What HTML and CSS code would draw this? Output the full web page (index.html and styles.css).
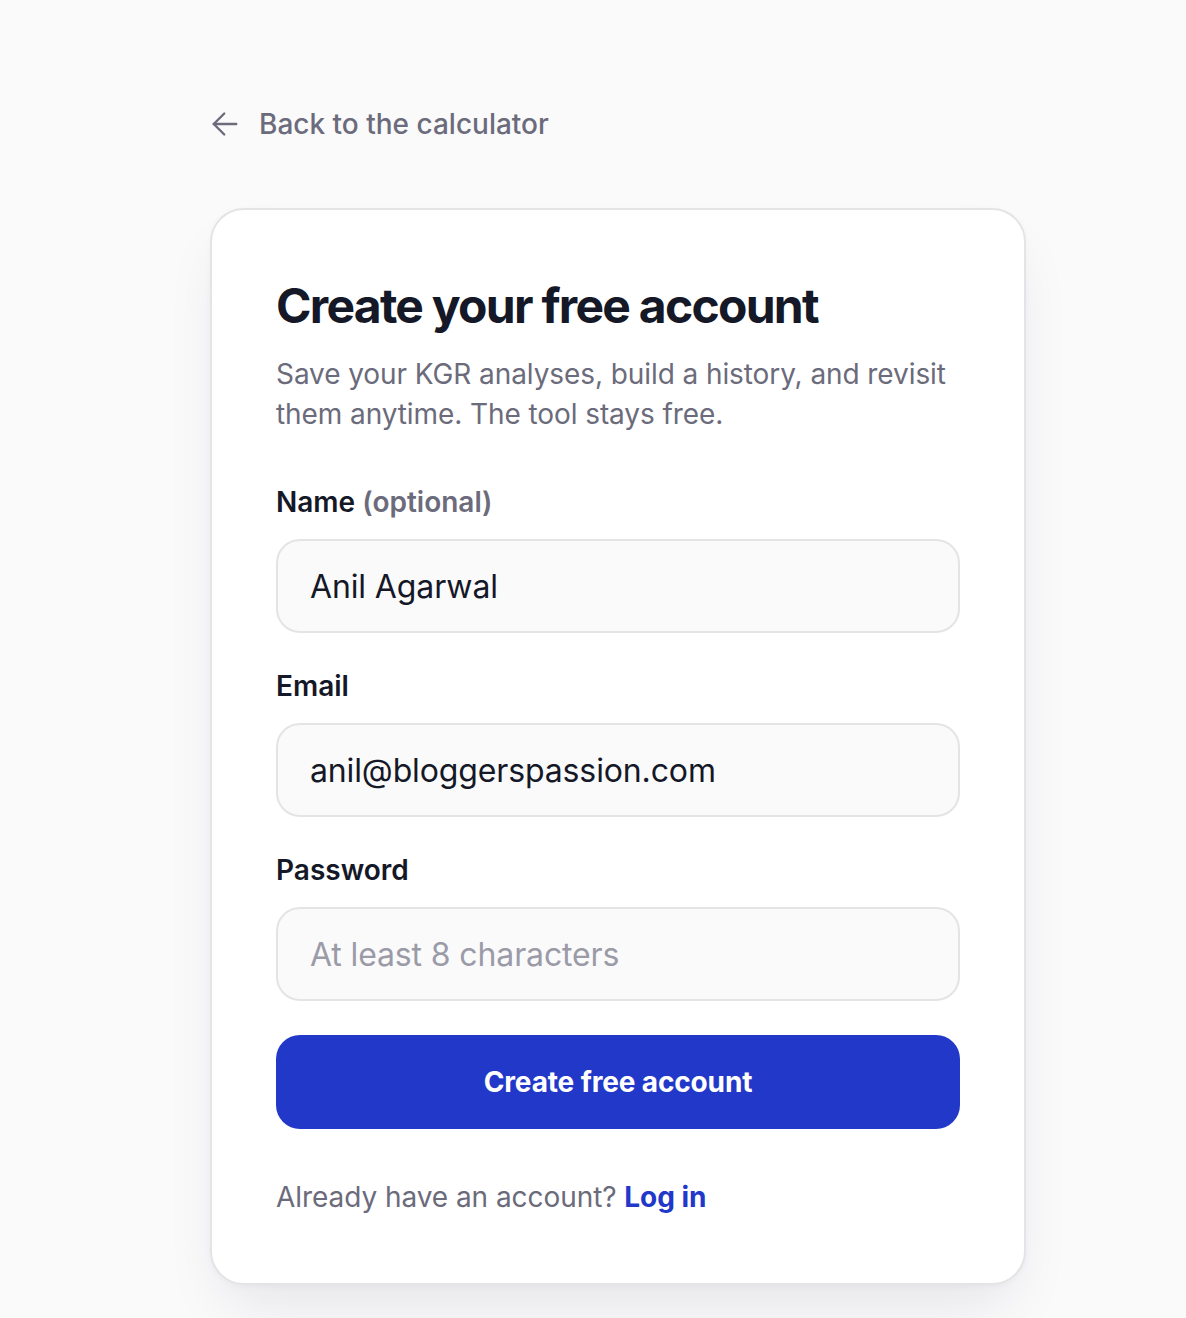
FILE: index.html
```html
<!DOCTYPE html>
<html lang="en">
<head>
<meta charset="utf-8">
<title>Create your free account</title>
<link rel="stylesheet" href="styles.css">
</head>
<body>
<main class="page">
  <a class="back" href="#">
    <svg class="back-icon" viewBox="0 0 24 24" width="36" height="36" fill="none" stroke="currentColor" stroke-width="1.6" stroke-linecap="round" stroke-linejoin="round"><path d="M19.5 12h-15"/><path d="M11.5 19l-7-7 7-7"/></svg>
    <span>Back to the calculator</span>
  </a>
  <section class="card">
    <h1 class="title">Create your free account</h1>
    <p class="subtitle">Save your KGR analyses, build a history, and revisit them anytime. The tool stays free.</p>
    <form class="form">
      <div class="field">
        <label class="label" for="name">Name <span class="muted">(optional)</span></label>
        <input class="input" id="name" type="text" value="Anil Agarwal">
      </div>
      <div class="field">
        <label class="label" for="email">Email</label>
        <input class="input" id="email" type="email" value="anil@bloggerspassion.com">
      </div>
      <div class="field">
        <label class="label" for="password">Password</label>
        <input class="input" id="password" type="password" placeholder="At least 8 characters">
      </div>
      <button class="button" type="button">Create free account</button>
    </form>
    <p class="footer">Already have an account? <a class="link" href="#">Log in</a></p>
  </section>
</main>
</body>
</html>
```

FILE: styles.css
```css
* { box-sizing: border-box; }
html, body { margin: 0; padding: 0; }
body {
  background: #fafafb;
  font-family: Inter, "Noto Sans", "Liberation Sans", sans-serif;
  color: #151827;
  min-height: 1318px;
}
.page {
  width: 816px;
  margin-left: 210px;
  padding-top: 96px;
  padding-bottom: 40px;
}
.back {
  display: flex;
  align-items: center;
  gap: 16px;
  height: 56px;
  margin-left: -3px;
  color: #6b6b7b;
  text-decoration: none;
  font-size: 28px;
  font-weight: 500;
}
.back-icon { flex: none; }
.card {
  margin-top: 56px;
  background: #ffffff;
  border: 2px solid #e4e4e7;
  border-radius: 34px;
  padding: 64px 64px 66px;
  box-shadow: 0 30px 60px -16px rgba(20, 24, 50, 0.10), 0 2px 6px rgba(20, 24, 50, 0.03);
}
.title {
  margin: 0;
  font-size: 48px;
  line-height: 64px;
  font-weight: 700;
  letter-spacing: -0.036em;
  color: #141827;
}
.subtitle {
  margin: 16px 0 0;
  font-size: 28px;
  line-height: 40px;
  letter-spacing: -0.003em;
  color: #6b6b7b;
}
.form {
  margin-top: 47px;
  display: flex;
  flex-direction: column;
  gap: 32px;
}
.field { display: flex; flex-direction: column; }
.label {
  font-size: 28px;
  line-height: 42px;
  font-weight: 600;
  color: #141827;
  margin-bottom: 16px;
}
.muted { color: #6b6b7b; }
.input {
  width: 100%;
  height: 94px;
  border: 2px solid #e4e4e7;
  border-radius: 24px;
  background: #fafafb;
  padding: 0 32px;
  font-family: inherit;
  font-size: 32px;
  letter-spacing: -0.004em;
  color: #151827;
  outline: none;
}
.input::placeholder { color: #9b9ba8; }
.button {
  margin-top: 2px;
  height: 94px;
  border: none;
  border-radius: 24px;
  background: #2238c9;
  color: #ffffff;
  font-family: inherit;
  font-size: 28px;
  font-weight: 700;
  letter-spacing: -0.005em;
  cursor: pointer;
}
.footer {
  margin: 48px 0 0;
  font-size: 28px;
  line-height: 40px;
  letter-spacing: -0.002em;
  color: #6b6b7b;
}
.link {
  color: #2238c9;
  font-weight: 700;
  text-decoration: none;
}
```
